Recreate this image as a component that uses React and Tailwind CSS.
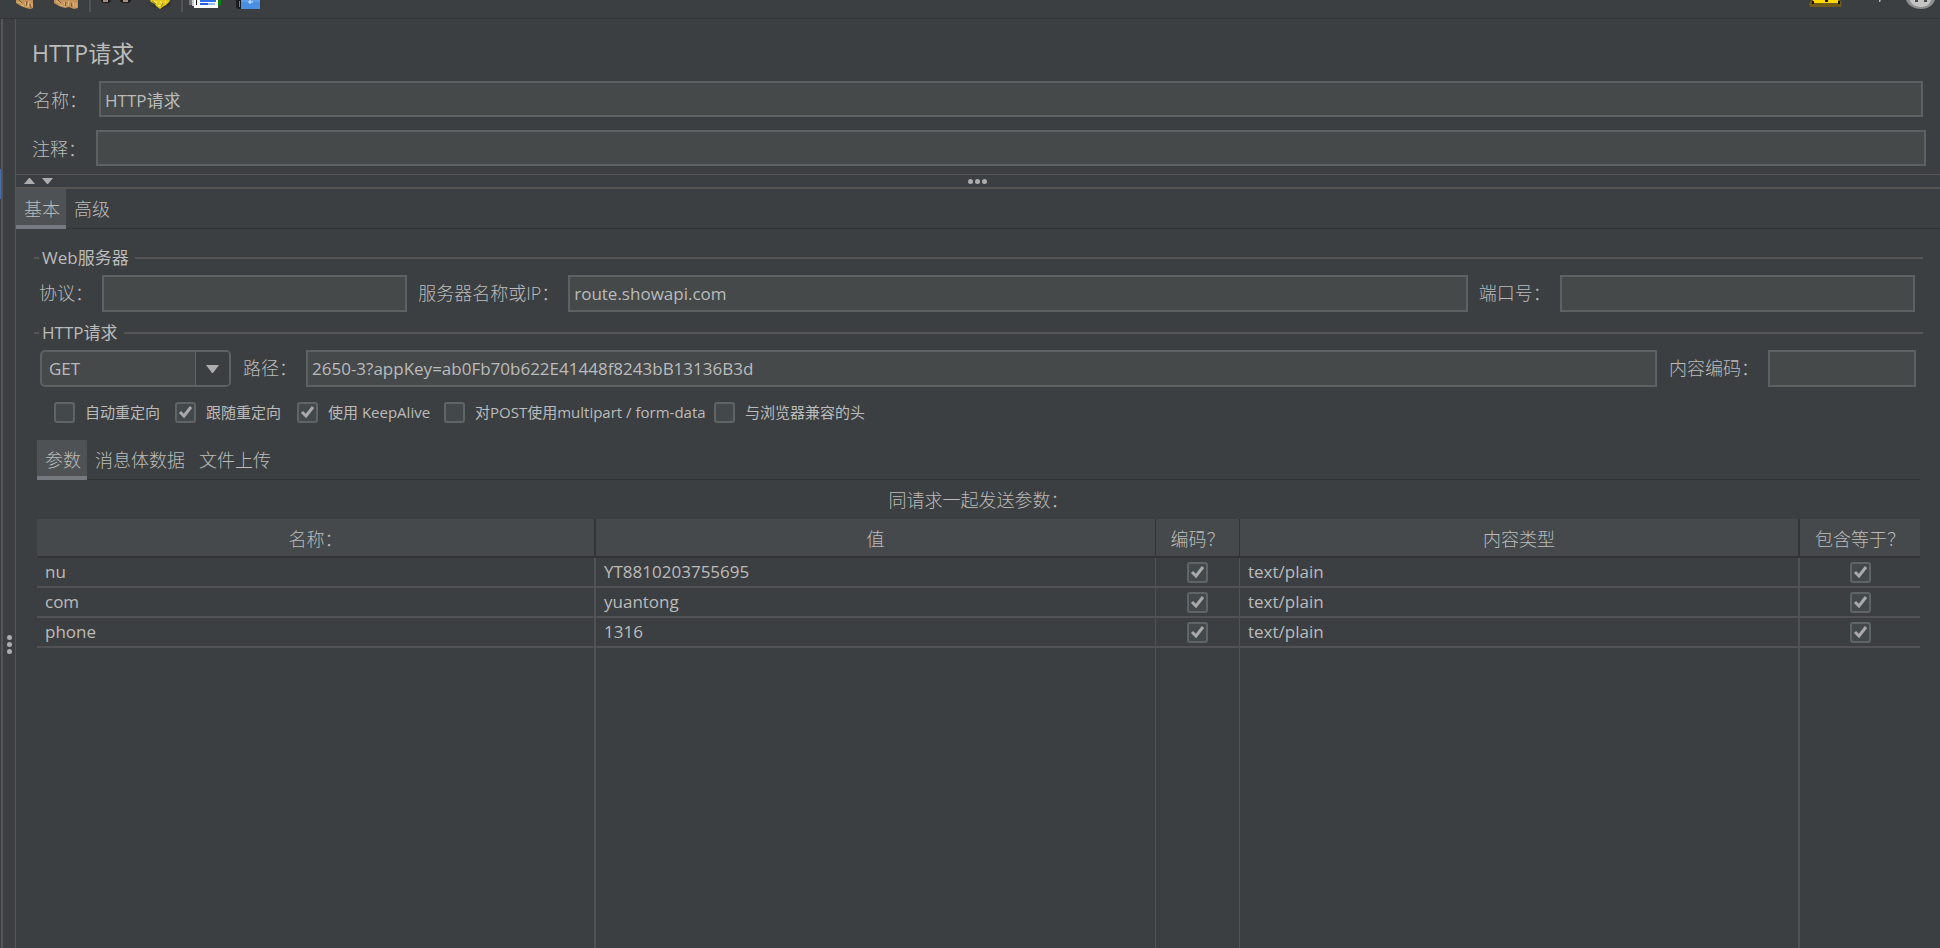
import { useState } from 'react'
import clsx from 'clsx'

const ROWS = [
  { name: 'nu', value: 'YT8810203755695', encode: true, type: 'text/plain', equals: true },
  { name: 'com', value: 'yuantong', encode: true, type: 'text/plain', equals: true },
  { name: 'phone', value: '1316', encode: true, type: 'text/plain', equals: true },
]

const OPTIONS = [
  { id: 'auto', label: '自动重定向', width: 'w-[121px]', checked: false },
  { id: 'follow', label: '跟随重定向', width: 'w-[122px]', checked: true },
  { id: 'keepalive', label: '使用 KeepAlive', width: 'w-[147px]', checked: true },
  { id: 'multipart', label: '对POST使用multipart / form-data', width: 'w-[270px]', checked: false },
  { id: 'compat', label: '与浏览器兼容的头', width: 'w-[160px]', checked: false },
]

const ToolButton = ({ label, children }) => (
  <button type="button" aria-label={label} className="h-[18px] w-11 shrink-0">
    <svg width="44" height="18" viewBox="0 0 44 18">{children}</svg>
  </button>
)

const ToolSeparator = () => <div className="mx-px h-3 w-0.5 shrink-0 bg-[#515456]" />

const Toolbar = () => (
  <header className="flex h-[19px] shrink-0 items-start overflow-hidden border-b border-[#323436]">
    <ToolButton label="清除">
      <path d="M16 0h17v8l-3 1-4-1-5-2-5-3z" fill="#c4935a" />
      <path d="M18 2l4 1M21 5l3 1M25 2l1 5M29 1l-1 6M32 3v4" stroke="#e0bb83" strokeWidth="1" />
      <path d="M19 0l3 3M27 1l-1 5M30 4l1 4" stroke="#7b572f" strokeWidth="1" />
    </ToolButton>
    <ToolButton label="清除全部">
      <path d="M10 0h24v8l-4 1-5-2-4 1-6-2-5-3z" fill="#c4935a" />
      <path d="M12 1l4 2M16 5l3 1M20 2l1 5M25 1l-1 5M29 2l1 5M32 3v4" stroke="#e0bb83" strokeWidth="1" />
      <path d="M14 0l3 3M22 2l-1 4M27 3l1 4" stroke="#7b572f" strokeWidth="1" />
    </ToolButton>
    <ToolSeparator />
    <ToolButton label="查找">
      <path d="M9 0h10v1l-2 2h-6l-2-2zM28 0h11v1l-2 2h-7l-2-2z" fill="#1b1b1b" />
      <path d="M11 0h5v2h-5zM31 0h5v2h-5z" fill="#a98f80" />
    </ToolButton>
    <ToolButton label="重置查找">
      <path d="M13 5l10 1 12-4v3L26 9l-9-2z" fill="#303234" />
      <path d="M14 0h20l-1 2-3 3-2 1-4 3-4-3-1-2-4-2z" fill="#e2c91c" />
      <path d="M18 1l3 2M24 1l2 3M22 5l3 1M29 1l1 2" stroke="#fff27a" strokeWidth="1" />
      <path d="M16 1l4 3M27 3l-2 4" stroke="#9c850b" strokeWidth="1" />
    </ToolButton>
    <ToolSeparator />
    <ToolButton label="函数助手">
      <path d="M5 0h3v5H5z" fill="#777" />
      <path d="M8 0h2v6H8z" fill="#c9c9c9" />
      <path d="M34 0h3v5l-2 1h-1z" fill="#078308" />
      <path d="M10 0h24v8H10z" fill="#fff" />
      <path d="M12 0h1v5h-1z" fill="#111" />
      <path d="M16 0h16v2H16z" fill="#2b70ea" />
      <path d="M16 3h8v2h-8z" fill="#1e61e5" />
      <path d="M24 3h7v2h-7z" fill="#93b9f8" />
    </ToolButton>
    <ToolButton label="帮助">
      <path d="M8 0h5v9h-3L8 7z" fill="#191b1d" />
      <path d="M11 1h1v6h-1z" fill="#75797c" />
      <path d="M13 0h19v9H13z" fill="#4b8fe3" />
      <path d="M13 0h19v2H13z" fill="#5c9ceb" />
      <path d="M22 0v4M20 2h5" stroke="#d9e9ff" strokeWidth="1" />
    </ToolButton>
    <div className="flex-1" />
    <ToolButton label="警告">
      <path d="M3 0h29l2 3-1 4H2L1 4z" fill="#6e5b1b" />
      <path d="M5 0h25l1 3H4z" fill="#ffd800" />
      <path d="M17 0h3v2h-3zM4 1h2v3H4zM30 1h2v3h-2z" fill="#171200" />
    </ToolButton>
    <ToolButton label="线程数">
      <path d="M27 0h2l-1 2h-1z" fill="#b5b5b5" />
    </ToolButton>
    <ToolButton label="运行状态">
      <path d="M10 0h29c-2 6-8 9-14 9S12 6 10 0z" fill="#8f8f8f" />
      <path d="M14 0h21c-1 5-6 7-10 7s-10-2-11-7z" fill="#c4c4c4" />
      <path d="M19 0h3v2h-3zM28 0h3v2h-3z" fill="#4c4c4c" />
    </ToolButton>
  </header>
)

const Field = ({ className, ...props }) => (
  <input
    type="text"
    spellCheck={false}
    className={clsx(
      'min-w-0 border-2 border-[#5e6162] bg-[#45494a] px-1 text-[17px] font-normal text-[#bbbbbb] outline-none',
      className,
    )}
    {...props}
  />
)

const CheckBox = ({ defaultChecked, ...props }) => (
  <span className="relative block size-[21px] shrink-0">
    <input
      type="checkbox"
      defaultChecked={defaultChecked}
      className="peer block size-[21px] appearance-none rounded-[3px] border-2 border-[#5f6464] bg-[#43494a]"
      {...props}
    />
    <svg
      viewBox="0 0 21 21"
      className="pointer-events-none absolute inset-0 hidden size-[21px] peer-checked:block"
    >
      <path d="M5 10l4 4 7-9" fill="none" stroke="#a9a9a9" strokeWidth="3" />
    </svg>
  </span>
)

const Tabs = ({ tabs }) => {
  const [active, setActive] = useState(tabs[0])
  return (
    <div role="tablist" className="flex h-10 shrink-0 shadow-[inset_0_-1px_0_#323436]">
      {tabs.map((tab) => (
        <button
          key={tab}
          type="button"
          role="tab"
          aria-selected={tab === active}
          onClick={() => setActive(tab)}
          className={clsx(
            'border-b-4 pt-1 pr-1.5 pl-2 text-[18px] font-light',
            tab === active ? 'border-[#747a80] bg-[#4e5254]' : 'border-transparent',
          )}
        >
          {tab}
        </button>
      ))}
    </div>
  )
}

const Group = ({ title, children, className }) => (
  <fieldset className={clsx('min-w-0 border-t-2 border-[#555555] pt-[5px]', className)}>
    <legend className="ml-[5px] pr-1.5 pl-[3px] text-[17px] leading-6">{title}</legend>
    {children}
  </fieldset>
)

const Dots = ({ vertical }) => (
  <div className={clsx('flex gap-0.5', vertical && 'flex-col')}>
    {[0, 1, 2].map((i) => (
      <span key={i} className="size-[5px] rounded-full bg-[#adadad]" />
    ))}
  </div>
)

const HEAD_CELL = 'border-b-2 border-[#323436] bg-[#45494b] px-0 pt-1 pb-0 font-light'
const BODY_CELL = 'h-[30px] border-b-2 border-[#505253] px-2 py-0'

const ParamTable = () => (
  <table className="h-full w-full table-fixed border-separate border-spacing-0 text-[17px]">
    <colgroup>
      <col />
      <col />
      <col className="w-[84px]" />
      <col />
      <col className="w-[122px]" />
    </colgroup>
    <thead>
      <tr className="h-[39px] text-[18px]">
        <th className={clsx(HEAD_CELL, 'border-r-2')}>名称：</th>
        <th className={HEAD_CELL}>值</th>
        <th className={clsx(HEAD_CELL, 'border-l')}>编码？</th>
        <th className={clsx(HEAD_CELL, 'border-l')}>内容类型</th>
        <th className={clsx(HEAD_CELL, 'border-l-2')}>包含等于？</th>
      </tr>
    </thead>
    <tbody>
      {ROWS.map((row) => (
        <tr key={row.name} className="h-[30px]">
          <td className={clsx(BODY_CELL, 'border-r-2')}>{row.name}</td>
          <td className={BODY_CELL}>{row.value}</td>
          <td className={clsx(BODY_CELL, 'border-l')}>
            <div className="flex justify-center">
              <CheckBox defaultChecked={row.encode} aria-label="编码" />
            </div>
          </td>
          <td className={clsx(BODY_CELL, 'border-l')}>{row.type}</td>
          <td className={clsx(BODY_CELL, 'border-l-2')}>
            <div className="flex justify-center">
              <CheckBox defaultChecked={row.equals} aria-label="包含等于" />
            </div>
          </td>
        </tr>
      ))}
      <tr>
        <td className="border-r-2 border-[#505253]" />
        <td />
        <td className="border-l border-[#505253]" />
        <td className="border-l border-[#505253]" />
        <td className="border-l-2 border-[#505253]" />
      </tr>
    </tbody>
  </table>
)

export default function App() {
  return (
    <div className="flex h-screen flex-col overflow-hidden bg-[#3c3f41] font-['Open_Sans','Noto_Sans_CJK_SC',sans-serif] text-[#bbbbbb]">
      <Toolbar />
      <div className="flex min-h-0 flex-1">
        <div className="w-px pt-[150px]">
          <div className="h-[30px] bg-[#4b6eaf]" />
        </div>
        <div className="flex w-[15px] shrink-0 justify-center border-r border-l-2 border-[#555555] pt-[616px]">
          <Dots vertical />
        </div>

        <main className="flex min-w-0 flex-1 flex-col">
          <h1 className="mt-[18px] mb-3 ml-4 text-[23px] leading-8">HTTP请求</h1>
          <div className="mb-[13px] flex items-center pr-[17px] pl-[17px]">
            <label htmlFor="name" className="w-[66px] pt-0.5 text-[18px] font-light">名称：</label>
            <Field id="name" defaultValue="HTTP请求" className="h-9 flex-1" />
          </div>
          <div className="mb-2 flex items-center pr-[14px] pl-4">
            <label htmlFor="comment" className="w-16 pt-0.5 text-[18px] font-light">注释：</label>
            <Field id="comment" className="h-9 flex-1" />
          </div>

          <div className="grid h-[15px] shrink-0 grid-cols-3 items-center border-t border-b-2 border-[#555555]">
            <div className="flex gap-[7px] pl-2">
              <button type="button" aria-label="折叠">
                <svg width="11" height="6" className="block"><path d="M0 6l5-6h1l5 6z" fill="#adadad" /></svg>
              </button>
              <button type="button" aria-label="展开">
                <svg width="11" height="6" className="block"><path d="M0 0h11l-5 6h-1z" fill="#adadad" /></svg>
              </button>
            </div>
            <div className="flex justify-center">
              <Dots />
            </div>
          </div>

          <Tabs tabs={['基本', '高级']} />

          <div className="flex min-h-0 flex-1 flex-col pt-[17px] pr-[17px] pl-[18px]">
            <Group title="Web服务器" className="mb-[9px]">
              <div className="flex items-center gap-[11px] pr-2 pl-[5px] text-[18px] font-light">
                <div className="flex grow-[368] basis-0 items-center">
                  <label htmlFor="protocol" className="w-[63px] shrink-0">协议：</label>
                  <Field id="protocol" className="h-[37px] flex-1" />
                </div>
                <div className="flex grow-[1049] basis-0 items-center">
                  <label htmlFor="server" className="w-[150px] shrink-0">服务器名称或IP：</label>
                  <Field id="server" defaultValue="route.showapi.com" className="h-[37px] flex-1" />
                </div>
                <div className="flex grow-[436] basis-0 items-center">
                  <label htmlFor="port" className="w-[81px] shrink-0">端口号：</label>
                  <Field id="port" className="h-[37px] flex-1" />
                </div>
              </div>
            </Group>

            <Group title="HTTP请求">
              <div className="flex items-center gap-3 pr-[7px] pl-[6px] text-[18px] font-light">
                <div className="relative w-[191px] shrink-0">
                  <select
                    aria-label="方法"
                    defaultValue="GET"
                    className="block h-[37px] w-full appearance-none rounded-[5px] border-2 border-[#5e6162] bg-[#45494a] px-[7px] text-[17px] font-normal outline-none"
                  >
                    <option>GET</option>
                    <option>POST</option>
                    <option>PUT</option>
                    <option>DELETE</option>
                  </select>
                  <span className="pointer-events-none absolute inset-y-0.5 right-0.5 flex w-[34px] items-center justify-center rounded-r-[3px] border-l border-[#646464] bg-[#3c3f41]">
                    <svg width="13" height="8"><path d="M0 0h13l-6 8h-1z" fill="#adadad" /></svg>
                  </span>
                </div>
                <div className="flex flex-1 items-center">
                  <label htmlFor="path" className="w-[63px] shrink-0">路径：</label>
                  <Field id="path" defaultValue="2650-3?appKey=ab0Fb70b622E41448f8243bB13136B3d" className="h-[37px] flex-1" />
                </div>
                <div className="flex items-center">
                  <label htmlFor="encoding" className="w-[99px] shrink-0">内容编码：</label>
                  <Field id="encoding" className="h-[37px] w-[148px]" />
                </div>
              </div>
              <div className="mt-[15px] flex pl-5 text-[15px] leading-[21px]">
                {OPTIONS.map(({ id, label, width, checked }) => (
                  <div key={id} className={clsx('flex shrink-0 items-center gap-[10px] whitespace-nowrap', width)}>
                    <CheckBox id={id} defaultChecked={checked} />
                    <label htmlFor={id}>{label}</label>
                  </div>
                ))}
              </div>
            </Group>

            <section className="mt-[17px] flex min-h-0 flex-1 flex-col pr-[3px] pl-[3px]">
              <Tabs tabs={['参数', '消息体数据', '文件上传']} />
              <h2 className="pt-2 pb-[7px] text-center text-[18px] leading-6 font-light">同请求一起发送参数：</h2>
              <div className="min-h-0 flex-1">
                <ParamTable />
              </div>
            </section>
          </div>
        </main>
      </div>
    </div>
  )
}
